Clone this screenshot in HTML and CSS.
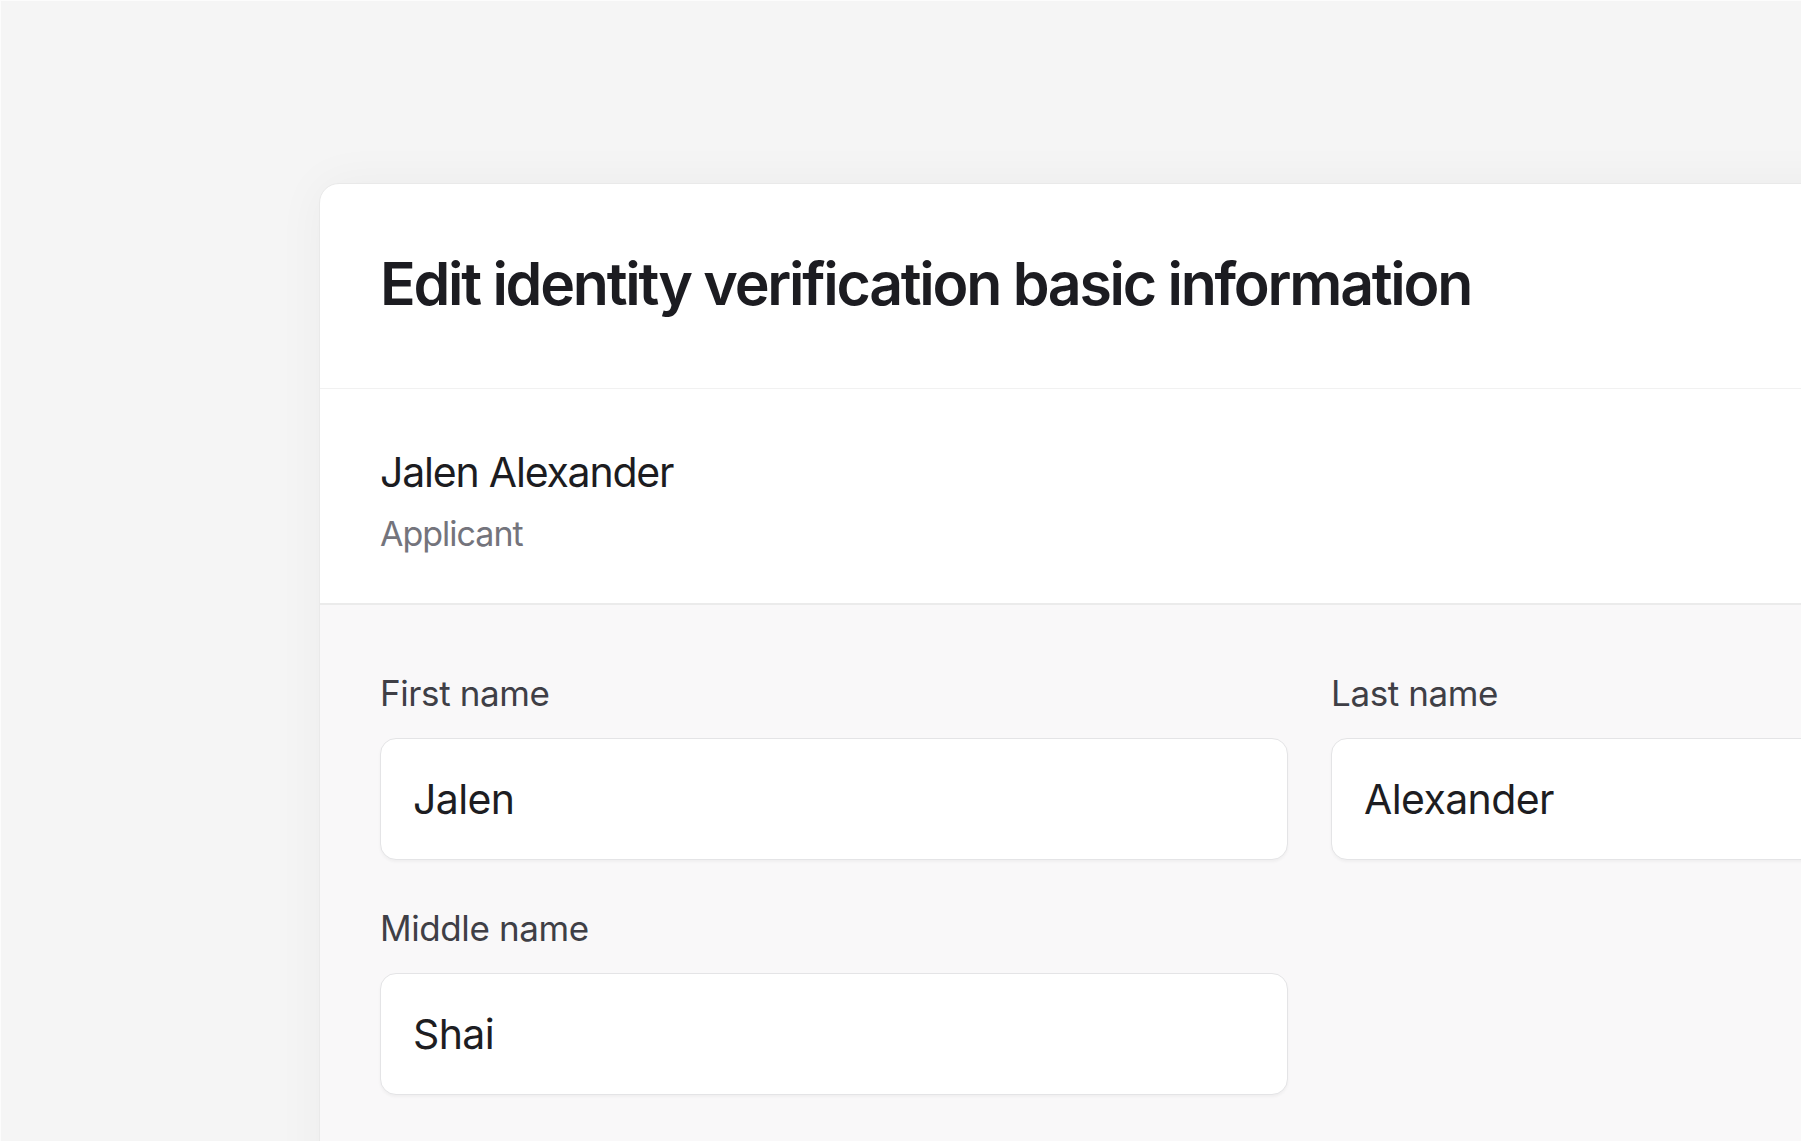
FILE: index.html
```html
<!DOCTYPE html>
<html lang="en">
<head>
<meta charset="utf-8">
<title>Edit identity verification basic information</title>
<link rel="stylesheet" href="styles.css">
</head>
<body>
<div class="frame">
  <section class="card">
    <header class="card-header">
      <h1 class="title">Edit identity verification basic information</h1>
    </header>
    <div class="person">
      <div class="person-name">Jalen Alexander</div>
      <div class="person-role">Applicant</div>
    </div>
    <form class="form">
      <div class="field">
        <label class="label" for="first">First name</label>
        <input class="input" id="first" type="text" value="Jalen">
      </div>
      <div class="field">
        <label class="label" for="last">Last name</label>
        <input class="input" id="last" type="text" value="Alexander">
      </div>
      <div class="field">
        <label class="label" for="middle">Middle name</label>
        <input class="input" id="middle" type="text" value="Shai">
      </div>
    </form>
  </section>
</div>
</body>
</html>
```
FILE: styles.css
```css
html, body {
  margin: 0;
  padding: 0;
  height: 100%;
  overflow: hidden;
  background: #f5f5f5;
}

body {
  font-family: "Inter", "Liberation Sans", sans-serif;
  color: #1d1d22;
}

.frame {
  box-sizing: border-box;
  height: 100%;
  border-top: 1px solid #fcfcfc;
  border-left: 1px solid #fcfcfc;
  padding-top: 182px;
  padding-left: 318px;
}

.card {
  width: 1980px;
  background: #ffffff;
  border: 1px solid #e9e9e9;
  border-radius: 20px;
  box-shadow: 0 0 50px rgba(0, 0, 0, 0.045);
  overflow: hidden;
}

.card-header {
  padding: 64px 60px 68px;
  border-bottom: 1px solid #f1f1f1;
}

.title {
  margin: 0;
  font-size: 59px;
  line-height: 72px;
  font-weight: 600;
  letter-spacing: -2.25px;
  color: #1c1c21;
}

.person {
  padding: 58px 60px 47px;
  border-bottom: 2px solid #ebebeb;
  display: flex;
  flex-direction: column;
  gap: 15px;
}

.person-name {
  font-size: 41px;
  line-height: 50px;
  color: #1c1c21;
  letter-spacing: -1.2px;
}

.person-role {
  font-size: 34px;
  line-height: 44px;
  color: #74747c;
  letter-spacing: -1px;
}

.form {
  background: #f9f8f9;
  padding: 67px 60px 200px;
  display: grid;
  grid-template-columns: 908px 908px;
  column-gap: 43px;
  row-gap: 47px;
  align-items: start;
}

.field {
  display: flex;
  flex-direction: column;
  gap: 24px;
}

.label {
  font-size: 35px;
  line-height: 42px;
  color: #3f3f46;
  letter-spacing: -0.4px;
}

.input {
  box-sizing: border-box;
  width: 100%;
  height: 122px;
  margin: 0;
  padding: 0 32px;
  border: 1.5px solid #e4e4e6;
  border-radius: 16px;
  background: #ffffff;
  box-shadow: 0 2px 3px rgba(0, 0, 0, 0.04);
  font-family: "Inter", "Liberation Sans", sans-serif;
  font-size: 41px;
  color: #1d1d22;
  letter-spacing: -0.6px;
  outline: none;
}
```
